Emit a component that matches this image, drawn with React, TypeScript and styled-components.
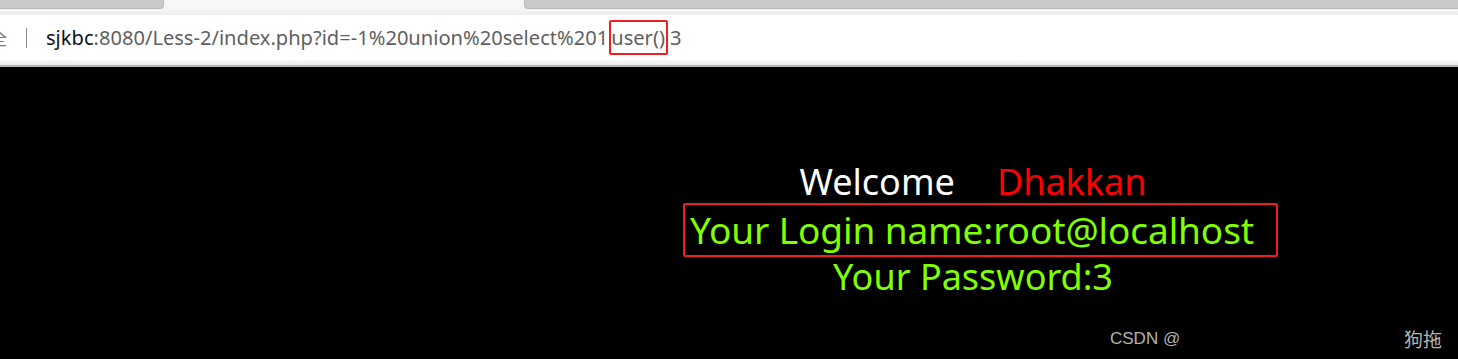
import styled, { createGlobalStyle } from "styled-components";

const GlobalStyle = createGlobalStyle`
	html, body {
		margin: 0;
		padding: 0;
		background: #000;
		overflow: hidden;
	}
	#root {
		width: 1458px;
		height: 359px;
	}
`;

const Frame = styled.div`
	display: flex;
	flex-direction: column;
	width: 1458px;
	height: 359px;
	background: #000;
`;

const TabStrip = styled.div`
	display: flex;
	height: 9px;
	background: #f7f7f7;
`;

const Tab = styled.div<{ $w?: number; $side: "left" | "right" }>`
	flex: ${(p) => (p.$w ? `0 0 ${p.$w}px` : "1")};
	background: #cacaca;
	border-bottom: 1px solid #b9b9b9;
	border-${(p) => (p.$side === "left" ? "right" : "left")}: 1px solid #b9b9b9;
	border-bottom-${(p) => (p.$side === "left" ? "right" : "left")}-radius: 4px;
`;

const Gap = styled.div`
	flex: 0 0 360px;
`;

const Strip = styled.div<{ $h: number }>`
	height: ${(p) => p.$h}px;
	background: linear-gradient(#f7f7f7, #eeeeee);
`;

const AddressBar = styled.div`
	display: flex;
	align-items: center;
	height: 45px;
	background: #fff;
	font-family: "Noto Sans", "Noto Sans CJK SC", sans-serif;
	font-size: 20.1px;
	color: #5f5f5f;
`;

const SiteIcon = styled.span`
	margin-left: -10px;
	width: 18px;
	color: #777;
	font-size: 17px;
	font-family: "Noto Sans CJK SC", sans-serif;
`;

const Divider = styled.span`
	width: 1px;
	height: 20px;
	background: #8a8a8a;
	margin: 0 19px 0 18px;
`;

const Url = styled.span`
	white-space: pre;
`;

const Host = styled.span`
	color: #111;
`;

const Marked = styled.span`
	border: 2px solid #f01e1e;
	border-radius: 2px;
	padding: 2px 1px 2px 0;
	margin: 0 2px 0 1px;
`;

const BottomEdge = styled.div`
	height: 2px;
	background: #b7b7b7;
`;

const Content = styled.div`
	position: relative;
	flex: 1;
	padding: 91px 0 0 488px;
	font-family: "Noto Sans", sans-serif;
	text-align: center;
	font-size: 36px;
	line-height: 47px;
`;

const Line = styled.div`
	color: #7fff00;
	line-height: 40px;
`;

const WelcomeLine = styled.div`
	color: #fff;
	height: 45px;
`;

const Red = styled.span`
	color: #ff0000;
	margin-left: 42px;
`;

const Boxed = styled.div`
	display: inline-block;
	margin-left: 15px;
	border: 2px solid #f01e1e;
	border-radius: 2px;
	padding: 1px 22px 2px 5px;
	line-height: 47px;
	font-size: 37px;
	letter-spacing: -0.1px;
	color: #7fff00;
`;

const Watermark = styled.div`
	position: absolute;
	left: 1110px;
	right: 16px;
	bottom: 9px;
	display: flex;
	justify-content: space-between;
	align-items: center;
	font-family: "Liberation Sans", "Noto Sans CJK SC", sans-serif;
	font-size: 17px;
	color: #b3b3b3;
	line-height: 22px;
`;

const Author = styled.span`
	font-size: 19px;
	font-family: "Noto Sans CJK SC", sans-serif;
`;

export default function App() {
	return (
		<>
			<GlobalStyle />
			<Frame>
				<TabStrip>
					<Tab $w={163} $side="left" />
					<Gap />
					<Tab $side="right" />
				</TabStrip>
				<Strip $h={6} />
				<AddressBar>
					<SiteIcon>全</SiteIcon>
					<Divider />
					<Url>
						<Host>sjkbc</Host>:8080/Less-2/index.php?id=-1%20union%20select%201<Marked>user()</Marked>3
					</Url>
				</AddressBar>
				<Strip $h={5} />
				<BottomEdge />
				<Content>
					<WelcomeLine>
						Welcome<Red>Dhakkan</Red>
					</WelcomeLine>
					<Boxed>Your Login name:root@localhost</Boxed>
					<Line>Your Password:3</Line>
					<Watermark>
						<span>CSDN @</span>
						<Author>狗拖</Author>
					</Watermark>
				</Content>
			</Frame>
		</>
	);
}
